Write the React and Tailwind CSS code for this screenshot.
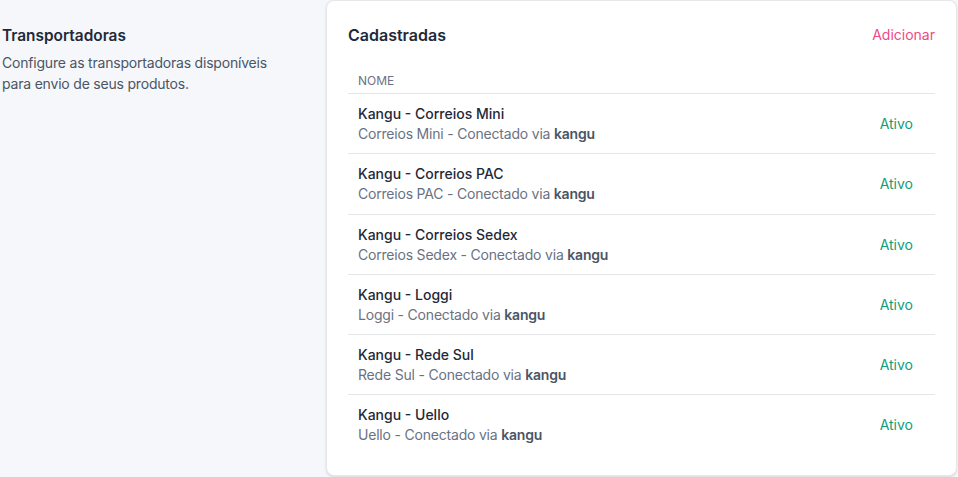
import React from "react";

const carriers = [
  { name: "Kangu - Correios Mini", service: "Correios Mini" },
  { name: "Kangu - Correios PAC", service: "Correios PAC" },
  { name: "Kangu - Correios Sedex", service: "Correios Sedex" },
  { name: "Kangu - Loggi", service: "Loggi" },
  { name: "Kangu - Rede Sul", service: "Rede Sul" },
  { name: "Kangu - Uello", service: "Uello" },
];

export default function App() {
  return (
    <div
      className="flex h-[477px] w-[958px] bg-[#f6f7fa] text-gray-900"
      style={{ fontFamily: "Inter, 'Liberation Sans', sans-serif" }}
    >
      {/* Section description */}
      <div className="w-[326px] shrink-0 pl-[2px] pt-[24px]">
        <h2 className="text-[15.4px] font-semibold leading-6 text-gray-800">Transportadoras</h2>
        <p className="mt-[4px] w-[290px] text-sm leading-[21px] tracking-[-0.2px] text-gray-600">
          Configure as transportadoras disponíveis para envio de seus produtos.
        </p>
      </div>

      {/* Card */}
      <div className="mb-px mr-px flex-1 rounded-lg border border-gray-200 bg-white px-[21px] pt-[20px] shadow-sm">
        <div className="flex items-center justify-between">
          <h3 className="text-base font-semibold leading-7 text-gray-800">Cadastradas</h3>
          <button className="text-sm leading-5 text-[#ef4a86]">Adicionar</button>
        </div>

        <div className="mt-[24px]">
          <div className="border-b border-gray-200 pb-[4px] pl-[10px] text-xs leading-4 uppercase text-gray-500">
            Nome
          </div>
          {carriers.map((c, i) => (
            <div
              key={c.name}
              className={`flex items-center justify-between pb-[9.25px] pl-[10px] pr-[22px] pt-[10px] ${
                i < carriers.length - 1 ? "border-b border-gray-200" : ""
              }`}
            >
              <div>
                <div className="text-sm font-medium leading-5 text-gray-800">{c.name}</div>
                <div className="text-sm leading-5 tracking-[-0.2px] text-gray-500">
                  {c.service} - Conectado via <span className="font-semibold text-gray-600">kangu</span>
                </div>
              </div>
              <span className="text-sm leading-5 text-[#0f9d7a]">Ativo</span>
            </div>
          ))}
        </div>
      </div>
    </div>
  );
}
